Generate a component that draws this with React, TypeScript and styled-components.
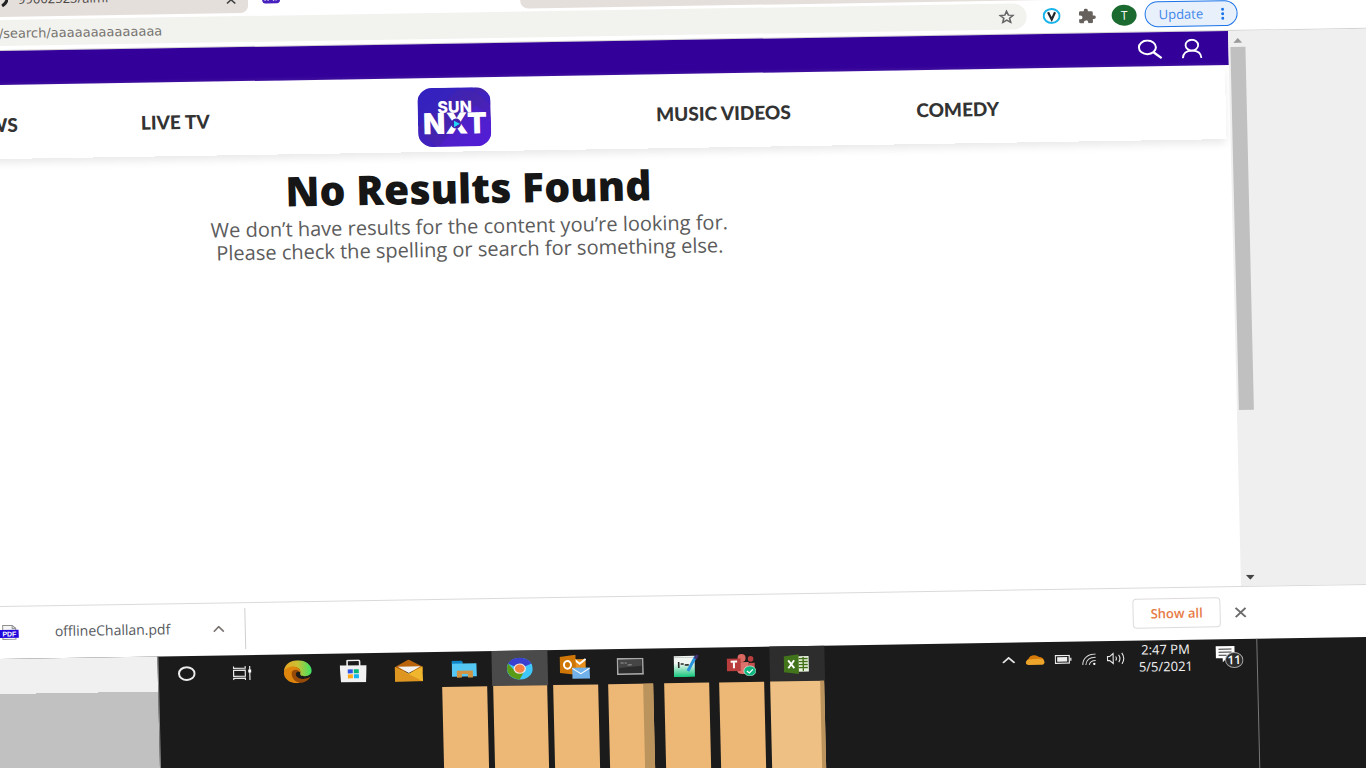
import React from "react";
import styled, { createGlobalStyle } from "styled-components";

const GlobalStyle = createGlobalStyle`
  *, *::before, *::after { box-sizing: border-box; }
  html, body, #root { height: 100%; }
  body { margin: 0; background: #fff; font-family: "Open Sans", "Noto Sans", sans-serif; }
  button, input { font: inherit; margin: 0; }
  svg { display: block; flex: none; }
`;

/* The desktop leans slightly to the left; it bleeds past the window on each side. */
const Viewport = styled.div`
  height: 100vh;
  min-height: 480px;
  overflow: hidden;
`;

const Desktop = styled.div`
  display: flex;
  flex-direction: column;
  width: calc(100% + 24px);
  height: calc(100% + 24px);
  margin-left: -24px;
  background: #fff;
  transform-origin: 24px 0;
  transform: rotate(-0.93deg) skewX(0.41deg);
`;

/* ---------- browser chrome ---------- */

const TabStrip = styled.div`
  display: flex;
  flex: none;
  height: 17px;
`;

const Tab = styled.div<{ $active?: boolean }>`
  display: flex;
  align-items: flex-end;
  flex: 0 0 272px;
  height: 17px;
  padding: 0 12px 9px ${(p) => (p.$active ? 14 : 20)}px;
  border-radius: 0 0 8px 8px;
  background: ${(p) => (p.$active ? "#fff" : "#e5dfdc")};
`;

const TabTitle = styled.span`
  margin-left: 10px;
  font-size: 13px;
  line-height: 18px;
  color: #4a4644;
  white-space: nowrap;
`;

const TabFill = styled.div`
  flex: 1;
  border-radius: 0 0 0 8px;
  background: #e5dfdc;
`;

const BareButton = styled.button`
  display: flex;
  align-items: center;
  justify-content: center;
  padding: 0;
  border: 0;
  background: none;
  color: inherit;
`;

const TabClose = styled(BareButton)`
  margin-left: auto;
`;

const Toolbar = styled.div`
  display: flex;
  align-items: flex-start;
  flex: none;
  height: 34px;
  padding: 3px 129px 0 0;
  border-bottom: 1px solid #d4d2d0;
`;

const AddressBar = styled.div`
  display: flex;
  align-items: center;
  flex: 1;
  height: 26px;
  padding: 0 12px 0 22px;
  border-radius: 0 13px 13px 0;
  background: #f2f3ef;
`;

const AddressInput = styled.input`
  flex: 1;
  min-width: 0;
  height: 24px;
  padding: 0;
  border: 0;
  outline: 0;
  background: none;
  font-family: "DejaVu Sans", "Open Sans", sans-serif;
  font-size: 13px;
  color: #77746f;
`;

const Extensions = styled.div`
  display: flex;
  align-items: center;
  gap: 18px;
  height: 26px;
  padding: 0 8px 0 16px;
`;

const Avatar = styled(BareButton)`
  width: 25px;
  height: 21px;
  margin-left: -2px;
  border-radius: 50%;
  background: #1b6b30;
  font-size: 12px;
  color: #fff;
`;

const UpdateButton = styled.button`
  display: flex;
  align-items: center;
  justify-content: space-between;
  width: 93px;
  height: 26px;
  padding: 0 12px 0 13px;
  border: 1px solid #1a73e8;
  border-radius: 13px;
  background: #e8f1fb;
  font-size: 13px;
  color: #3f86ea;
`;

/* ---------- web page ---------- */

const Window = styled.div`
  display: flex;
  flex: 1;
  min-height: 0;
`;

const Page = styled.div`
  flex: 1;
  min-width: 0;
`;

const AccountBar = styled.div`
  display: flex;
  align-items: center;
  justify-content: flex-end;
  gap: 19px;
  height: 34px;
  padding-right: 26px;
  background: #330099;
  color: #fff;
`;

const Nav = styled.nav`
  display: grid;
  grid-template-columns: minmax(0, 57fr) 280fr 280fr 260fr 210fr 164fr;
  align-items: center;
  justify-items: center;
  height: 74px;
  margin-right: 4px;
  padding-top: 5px;
  box-shadow: 0 5px 8px -1px #e9e9e9;
`;

const NavLink = styled.a<{ $cut?: boolean }>`
  justify-self: ${(p) => (p.$cut ? "end" : "center")};
  margin-right: ${(p) => (p.$cut ? 18 : 0)}px;
  font-family: Lato, "Open Sans", sans-serif;
  font-size: 19px;
  font-weight: 900;
  line-height: 24px;
  color: #333;
  text-decoration: none;
  white-space: nowrap;
`;

const Results = styled.main`
  width: 78%;
  padding-top: 12px;
  text-align: center;
`;

const Heading = styled.h1`
  margin: 0;
  font-size: 41px;
  font-weight: 800;
  line-height: 48px;
  color: #161616;
`;

const Message = styled.p`
  margin: 3px 0 0;
  font-size: 20px;
  line-height: 23px;
  color: #5c5c5c;
`;

const Gutter = styled.div`
  display: flex;
  flex-direction: column;
  flex: 0 0 139px;
  align-items: flex-start;
  padding: 7px 0 6px 2px;
  background: #efefef;
`;

const Thumb = styled.div`
  width: 15px;
  height: 67%;
  margin: 4px 0 auto;
  background: #c0c0c0;
`;

const Arrow = styled(BareButton)`
  width: 15px;
`;

/* ---------- downloads ---------- */

const Downloads = styled.div`
  display: flex;
  align-items: center;
  flex: none;
  height: 53px;
  padding: 0 134px 2px 9px;
  border-top: 1px solid #dcd9d9;
  background: #fff;
`;

const FileName = styled.a`
  width: 158px;
  margin-left: 36px;
  font-size: 14px;
  line-height: 20px;
  color: #55585c;
  text-decoration: none;
`;

const Divider = styled.div`
  width: 1px;
  height: 41px;
  margin: 0 auto 0 20px;
  background: #cfcfcf;
`;

const ShowAll = styled.button`
  width: 88px;
  height: 30px;
  margin-right: 14px;
  padding: 0;
  border: 1px solid #dedada;
  border-radius: 4px;
  background: #fff;
  font-size: 13px;
  font-weight: 600;
  color: #e77a45;
`;

/* ---------- taskbar ---------- */

const Taskbar = styled.div`
  display: flex;
  flex: none;
  height: 133px;
  background: #1b1b1b;
`;

const Backdrop = styled.div`
  flex: 0 0 167px;
  border-right: 1px solid #8a8a8a;
  background: linear-gradient(#f0f0f0 35px, #c1c1c1 35px);
`;

const Apps = styled.div`
  display: grid;
  grid-template-columns: repeat(12, 1fr);
  width: 666px;
`;

const AppSlot = styled.div`
  display: flex;
  flex-direction: column;
  align-items: center;
`;

const AppButton = styled(BareButton)<{ $fill?: string }>`
  width: 100%;
  height: 35px;
  background: ${(p) => p.$fill ?? "transparent"};
`;

const Marker = styled.div<{ $wide?: boolean; $edge?: number; $light?: boolean }>`
  flex: 1;
  width: ${(p) => (p.$wide ? 54 : 45)}px;
  border-right: ${(p) => p.$edge ?? 0}px solid #bb935c;
  background: ${(p) => (p.$light ? "#efc083" : "#edb876")};
`;

const Tray = styled.div`
  display: flex;
  align-items: center;
  height: 35px;
  margin-left: auto;
`;

const TrayIcons = styled.div`
  display: flex;
  align-items: center;
  gap: 10px;
`;

const Clock = styled.time`
  width: 60px;
  margin: 0 20px 0 10px;
  font-size: 13px;
  line-height: 17px;
  text-align: center;
  color: #f2f2f2;
  white-space: nowrap;
`;

const EndPanel = styled.div`
  flex: 0 0 125px;
  margin-left: 13px;
  border-left: 1px solid #777;
`;

/* ---------- drawings ---------- */

const SunNxtLogo = () => (
  <svg width="73" height="59" viewBox="0 0 73 59" role="img" aria-label="SUN NXT">
    <defs>
      <linearGradient id="sn" x1="0" y1="0" x2="1" y2="1">
        <stop offset="0" stopColor="#3420bd" />
        <stop offset="0.5" stopColor="#4524ad" />
        <stop offset="1" stopColor="#5317dc" />
      </linearGradient>
      <clipPath id="snc"><rect width="73" height="59" rx="15" ry="14" /></clipPath>
    </defs>
    <g clipPath="url(#snc)">
      <rect width="73" height="59" fill="url(#sn)" />
      <path d="M0 0H42L20 22L0 38Z" fill="#2f22c4" opacity=".5" />
      <path d="M20 59L58 18L73 30V59Z" fill="#5420d6" opacity=".55" />
      <path d="M0 40L18 59H0Z" fill="#3d20c6" opacity=".6" />
      <path d="M28 0H55L73 18V6Z" fill="#3a1fca" opacity=".6" />
    </g>
    <text x="37" y="25" textAnchor="middle" fill="#fff" fontFamily="Inter, sans-serif" fontWeight="800" fontSize="16">SUN</text>
    <text x="37" y="46" textAnchor="middle" fill="#fff" fontFamily="Inter, sans-serif" fontWeight="900" fontSize="29">NXT</text>
    <circle cx="38" cy="36" r="5" fill="#4222ab" />
    <path d="M36 33L42 36.200L36 39.500Z" fill="#20d5f5" />
  </svg>
);

const Caret = ({ color, w = 12 }: { color: string; w?: number }) => (
  <svg width={w} height="7" viewBox="0 0 12 7" fill="none" stroke={color} strokeWidth="1.600" preserveAspectRatio="none"><path d="M1 6.200L6 1.200L11 6.200" /></svg>
);

const Cross = ({ size, color }: { size: number; color: string }) => (
  <svg width={size} height={size - 1} viewBox="0 0 12 12" fill="none" stroke={color} strokeWidth="2" preserveAspectRatio="none"><path d="M1 1L11 11M11 1L1 11" /></svg>
);

const Star = () => (
  <svg width="16" height="14" viewBox="0 0 24 23" fill="none" stroke="#666" strokeWidth="2.400" preserveAspectRatio="none"><path d="M12 2.500L14.700 9L21.700 9.500L16.300 14L18 21L12 17.200L6 21L7.700 14L2.300 9.500L9.300 9Z" /></svg>
);

const VBadge = () => (
  <svg width="18" height="16" viewBox="0 0 18 16"><ellipse cx="9" cy="8" rx="8" ry="7" fill="#fff" stroke="#17b4ea" strokeWidth="2" /><path d="M5.500 4.300L9 11.500L12.500 4.300" fill="none" stroke="#22252c" strokeWidth="2.200" /></svg>
);

const Puzzle = () => (
  <svg width="17" height="15" viewBox="1.500 1 21 21" fill="#66615c" preserveAspectRatio="none"><path d="M20.500 11H19V7a2 2 0 0 0-2-2h-4V3.500a2.500 2.500 0 0 0-5 0V5H4a2 2 0 0 0-2 2v3.800h1.500a2.700 2.700 0 0 1 0 5.400H2V20a2 2 0 0 0 2 2h3.800v-1.500a2.700 2.700 0 0 1 5.400 0V22H17a2 2 0 0 0 2-2v-4h1.500a2.500 2.500 0 0 0 0-5z" /></svg>
);

const Dots = () => (
  <svg width="4" height="13" viewBox="0 0 4 13" fill="#1a73e8"><circle cx="2" cy="2" r="1.500" /><circle cx="2" cy="6.500" r="1.500" /><circle cx="2" cy="11" r="1.500" /></svg>
);

const SearchIcon = () => (
  <svg width="25" height="20" viewBox="0 0 25 20" fill="none" stroke="#fff" strokeWidth="2"><ellipse cx="10" cy="8" rx="8.500" ry="6.800" /><path d="M16 13L24 19" strokeWidth="2.400" /></svg>
);

const UserIcon = () => (
  <svg width="21" height="20" viewBox="0 0 21 20" fill="none" stroke="#fff" strokeWidth="1.800"><ellipse cx="10.500" cy="6.500" rx="6.300" ry="5.400" /><path d="M1.200 19.500C1.500 14.500 5 12 10.500 12S19.500 14.500 19.800 19.500" /></svg>
);

const PdfIcon = () => (
  <svg width="19" height="15" viewBox="0 0 19 15"><path d="M3 .5H12.500L16 3.500V14.500H3Z" fill="#f6f6f6" stroke="#8f8f8f" /><path d="M12.500 .5V3.500H16" fill="none" stroke="#8f8f8f" /><rect y="5" width="19" height="8" fill="#2208dd" /><text x="9.500" y="11.500" textAnchor="middle" fontSize="7" fontWeight="700" fontFamily="Liberation Sans, sans-serif" fill="#fff">PDF</text></svg>
);

const Cortana = () => (
  <svg width="18" height="15" viewBox="0 0 18 15"><ellipse cx="9" cy="7.500" rx="7.800" ry="6.400" fill="none" stroke="#ededed" strokeWidth="2" /></svg>
);

const TaskView = () => (
  <svg width="19" height="14" viewBox="0 0 19 14" fill="none" stroke="#e6e6e6" strokeWidth="1.200"><path d="M.8 0V2H12.500V0M.8 14V12H12.500V14M.8 4H12.500V10H.8ZM17 0V14" /><rect x="15.500" y="3.500" width="3" height="3" fill="#fff" stroke="none" /></svg>
);

const Edge = () => (
  <svg width="28" height="23" viewBox="0 0 28 23">
    <defs>
      <linearGradient id="eg" x1="0" x2="1"><stop offset="0" stopColor="#e9a220" /><stop offset=".5" stopColor="#c9c135" /><stop offset="1" stopColor="#3be463" /></linearGradient>
    </defs>
    <path d="M0 12C0 5 6 0 14 0S28 5 28 10.500C28 14 25 16 21 16C17 16 16 14.500 16.500 13C17 9.500 15 7 10.500 7C5 7 1 9 0 12Z" fill="url(#eg)" />
    <path d="M0 12C1 8.500 6 5.500 10.500 6.200C15 7 17 9.500 16.500 12.500C15 9.800 10.800 10 10.300 13.500C10 17 13 22 17 22.500C7 24.500 0 19 0 12Z" fill="#dd850c" />
    <path d="M8 12C9 9 13 8.500 16 11.500C11.500 10 9.500 17 17 18.500C21 19.200 24 18 26.500 16.800C24.500 20.500 20 23 16 22.600C10.500 21.800 7 17 8 12Z" fill="#984b08" />
  </svg>
);

const Store = () => (
  <svg width="27" height="23" viewBox="0 0 27 23"><path d="M7.500 7V1.500Q7.500 1 8 1H19Q20 1 20 2V7" fill="none" stroke="#eee" strokeWidth="1.600" /><path d="M0 6H27L26 23H1Z" fill="#f1f1f1" /><path d="M8 10H13V14H8Z" fill="#2b55e8" /><path d="M14 10H19V14H14Z" fill="#07b57a" /><path d="M8 15H13V19H8Z" fill="#ffa91a" /><path d="M14 15H19V19H14Z" fill="#13b3f1" /></svg>
);

const Mail = () => (
  <svg width="28" height="22" viewBox="0 0 28 22"><path d="M0 7.500L14 0L28 7.500V12H0Z" fill="#b9640d" /><path d="M0 7.500L14 14L28 7V22H0Z" fill="#f0b62d" /><path d="M0 22V7.500L28 22Z" fill="#df9620" /><path d="M3 7H26L14 13.500Z" fill="#f3f3f3" /></svg>
);

const Explorer = () => (
  <svg width="25" height="18" viewBox="0 0 25 18"><path d="M0 1H9L11 3H25V16H0Z" fill="#55c7f5" /><path d="M0 0H10L11.500 2.200L10 3H0Z" fill="#0d84c6" /><path d="M5 10H21V17H16V13.500H10V17H5Z" fill="#cf9443" /></svg>
);

const Chrome = () => (
  <svg width="26" height="22" viewBox="0 0 26 22"><ellipse cx="13" cy="11" rx="13" ry="11" fill="#3fc6fb" /><path d="M13 11L1.500 6C3.500 2 8 0 13 0S22.800 2.500 24.700 6Z" fill="#3a3fd0" /><path d="M1.500 6C-1.500 12 1 20 12.500 22L18 13L8 13Z" fill="#599b17" /><ellipse cx="13" cy="11" rx="6.200" ry="5.200" fill="#f2e7e0" /><ellipse cx="13" cy="11" rx="4.900" ry="4.100" fill="#f78045" /></svg>
);

const Outlook = () => (
  <svg width="30" height="25" viewBox="0 0 30 25"><path d="M15 4.500H26V16H15Z" fill="#e98f1d" /><path d="M15 5L20 9L26 4.500" fill="none" stroke="#fff" strokeWidth="2" /><path d="M0 2L16 0V20L0 18Z" fill="#d07606" /><ellipse cx="7.800" cy="10" rx="3.500" ry="3.800" fill="none" stroke="#fff" strokeWidth="2" /><path d="M12.500 13H30V24H12.500Z" fill="#71b2ec" /><path d="M12.500 13.500L21 19L30 13.500" fill="none" stroke="#fff" /></svg>
);

const Terminal = () => (
  <svg width="27" height="17" viewBox="0 0 27 17"><rect x=".8" y=".8" width="25.400" height="15.400" fill="#2b2b2b" stroke="#a9a9a9" strokeWidth="1.600" /><path d="M2 2H25V8L2 10Z" fill="#454545" /><path d="M4 5H7M8 5H10M11 7H15" stroke="#9b9b9b" /></svg>
);

const Sketch = () => (
  <svg width="25" height="22" viewBox="0 0 25 22"><defs><linearGradient id="sk" x1="0" y1="0" x2="0" y2="1"><stop offset=".35" stopColor="#f2f6f2" /><stop offset="1" stopColor="#13c77c" /></linearGradient></defs><path d="M0 1H21V22H0Z" fill="url(#sk)" /><path d="M1 2.500H20" stroke="#aaa" strokeDasharray="1 1" /><path d="M5 7V13M7 9H10M11 10H15" stroke="#272727" strokeWidth="1.600" /><path d="M22 2L14 16" stroke="#2994dc" strokeWidth="3" /><path d="M24 0L21.500 4" stroke="#443070" strokeWidth="3" /></svg>
);

const Teams = () => (
  <svg width="29" height="22" viewBox="0 0 29 22"><circle cx="15" cy="4" r="4" fill="#dc6862" /><circle cx="24" cy="5" r="2.800" fill="#b9403f" /><path d="M10 8H22V15Q22 20 16 20Q10 20 10 15Z" fill="#df716c" /><path d="M22 9H28V15Q26 18 22 16Z" fill="#c4504e" /><path d="M0 4.500H14V17H0Z" fill="#b83d3c" /><path d="M4 7.500H10.500M7.200 7.500V14" stroke="#fff" strokeWidth="2" /><ellipse cx="23" cy="17" rx="6" ry="5" fill="#10b680" stroke="#e9fff6" strokeWidth=".6" /><path d="M20 17L22.500 19L26 15.500" fill="none" stroke="#fff" strokeWidth="1.300" /></svg>
);

const Excel = () => (
  <svg width="26" height="20" viewBox="0 0 26 20"><path d="M14 2H25V17.500H14Z" fill="#e9f2df" /><path d="M15 4.500H24M15 7.500H24M15 10.500H24M15 13.500H24M19.500 3V17" stroke="#417017" strokeWidth="1.300" /><path d="M0 2.200L15 0V20L0 17.800Z" fill="#42751b" /><path d="M4.500 6L10.500 14M10.500 6L4.500 14" stroke="#fff" strokeWidth="1.900" /></svg>
);

const Cloud = () => (
  <svg width="19" height="11" viewBox="0 0 19 11"><path d="M3 10A3.500 3.500 0 0 1 3 4A6 5 0 0 1 13 2.500Q19 3 18 8Z" fill="#d6790b" /><path d="M0 8Q1 4.500 6 5L12 4.500Q18.500 4 19 8Q18.500 10.500 15 10.500H3Q0 10.500 0 8Z" fill="#eda42a" /></svg>
);

const Battery = () => (
  <svg width="17" height="9" viewBox="0 0 17 9"><rect x=".6" y=".6" width="14" height="7.800" fill="none" stroke="#eee" strokeWidth="1.200" /><path d="M2.500 2.200H12.500V6.800H2.500ZM15.500 3H17V6H15.500Z" fill="#eee" /></svg>
);

const Wifi = () => (
  <svg width="15" height="12" viewBox="0 0 15 12" fill="none" stroke="#d8d8d8"><path d="M1 11.500C1 5 6 .8 14 .8M4 11.500C4.500 7 8 4 14 4M7.500 11.500C8 9 10 7.200 14 7.200" /><circle cx="12.500" cy="10.500" r="1.200" fill="#fff" stroke="none" /></svg>
);

const Volume = () => (
  <svg width="19" height="13" viewBox="0 0 19 13" fill="none" stroke="#e6e6e6" strokeWidth="1.100"><path d="M.8 4.500H3L6.500 1.500V11.500L3 8.500H.8ZM9 4.500Q10.500 6.500 9 8.500M12 2.800Q14.500 6.500 12 10.200M15.200 1Q19 6.500 15.200 12" /></svg>
);

const Notices = () => (
  <svg width="28" height="24" viewBox="0 0 28 24"><path d="M0 1H19V13H11L7 17V13H0Z" fill="#fff" /><path d="M3 4H16M3 7H16M3 10H11" stroke="#333" /><ellipse cx="18.500" cy="15" rx="8.700" ry="7.500" fill="#2c2c2c" stroke="#a5a5a5" /><text x="18.500" y="19" textAnchor="middle" fontFamily="Open Sans, sans-serif" fontSize="12" fontWeight="600" fill="#fff">11</text></svg>
);

type AppItem = { name: string; icon: React.ReactNode; fill?: string; open?: boolean; wide?: boolean; light?: boolean; edge?: number };

const apps: AppItem[] = [
  { name: "Search", icon: <Cortana /> },
  { name: "Task View", icon: <TaskView /> },
  { name: "Edge", icon: <Edge /> },
  { name: "Store", icon: <Store /> },
  { name: "Mail", icon: <Mail /> },
  { name: "File Explorer", icon: <Explorer />, open: true },
  { name: "Chrome", icon: <Chrome />, open: true, wide: true, fill: "#4a4a4a" },
  { name: "Outlook", icon: <Outlook />, open: true },
  { name: "Command Prompt", icon: <Terminal />, open: true, edge: 10 },
  { name: "Editor", icon: <Sketch />, open: true },
  { name: "Teams", icon: <Teams />, open: true },
  { name: "Excel", icon: <Excel />, open: true, wide: true, light: true, edge: 4, fill: "#2d2d2d" },
];

export default function App() {
  return (
    <Viewport>
      <GlobalStyle />
      <Desktop>
        <TabStrip>
          <Tab>
            <svg width="12" height="16" viewBox="0 0 12 16" fill="none" stroke="#222" strokeWidth="3"><path d="M9 2Q14 9 6 14" /></svg>
            <TabTitle>99002523/aimf</TabTitle>
            <TabClose aria-label="Close tab"><Cross size={10} color="#444" /></TabClose>
          </Tab>
          <Tab $active>
            <svg width="18" height="15" viewBox="0 0 18 15"><rect width="18" height="15" rx="4" fill="#4720be" /><path d="M3 9V12M6 9V12M9 9L12 12M14 9V12" stroke="#fff" strokeWidth="1.200" /></svg>
          </Tab>
          <TabFill />
        </TabStrip>

        <Toolbar>
          <AddressBar>
            <AddressInput aria-label="Address" defaultValue="/search/aaaaaaaaaaaaaa" />
            <BareButton aria-label="Bookmark"><Star /></BareButton>
          </AddressBar>
          <Extensions>
            <BareButton aria-label="Extension"><VBadge /></BareButton>
            <BareButton aria-label="Extensions"><Puzzle /></BareButton>
            <Avatar>T</Avatar>
          </Extensions>
          <UpdateButton>Update<Dots /></UpdateButton>
        </Toolbar>

        <Window>
          <Page>
            <AccountBar>
              <BareButton aria-label="Search"><SearchIcon /></BareButton>
              <BareButton aria-label="Account"><UserIcon /></BareButton>
            </AccountBar>
            <Nav>
              <NavLink href="#" $cut>NEWS</NavLink>
              <NavLink href="#">LIVE TV</NavLink>
              <a href="#"><SunNxtLogo /></a>
              <NavLink href="#">MUSIC VIDEOS</NavLink>
              <NavLink href="#">COMEDY</NavLink>
            </Nav>
            <Results>
              <Heading>No Results Found</Heading>
              <Message>
                We don’t have results for the content you’re looking for.
                <br />
                Please check the spelling or search for something else.
              </Message>
            </Results>
          </Page>
          <Gutter>
            <Arrow aria-label="Scroll up"><svg width="9" height="5" viewBox="0 0 9 5" fill="#9a9a9a"><path d="M0 5L4.500 0L9 5Z" /></svg></Arrow>
            <Thumb />
            <Arrow aria-label="Scroll down"><svg width="9" height="5" viewBox="0 0 9 5" fill="#444"><path d="M0 0L4.500 5L9 0Z" /></svg></Arrow>
          </Gutter>
        </Window>

        <Downloads>
          <PdfIcon />
          <FileName href="#">offlineChallan.pdf</FileName>
          <BareButton aria-label="File options"><Caret color="#77726f" /></BareButton>
          <Divider />
          <ShowAll>Show all</ShowAll>
          <BareButton aria-label="Close downloads"><Cross size={12} color="#6c6c6c" /></BareButton>
        </Downloads>

        <Taskbar>
          <Backdrop />
          <Apps>
            {apps.map((a) => (
              <AppSlot key={a.name}>
                <AppButton aria-label={a.name} $fill={a.fill}>{a.icon}</AppButton>
                {a.open && <Marker $wide={a.wide} $edge={a.edge} $light={a.light} />}
              </AppSlot>
            ))}
          </Apps>
          <Tray>
            <TrayIcons>
              <Caret color="#e4e4e4" w={14} />
              <Cloud />
              <Battery />
              <Wifi />
              <Volume />
            </TrayIcons>
            <Clock>2:47 PM<br />5/5/2021</Clock>
            <Notices />
          </Tray>
          <EndPanel />
        </Taskbar>
      </Desktop>
    </Viewport>
  );
}
